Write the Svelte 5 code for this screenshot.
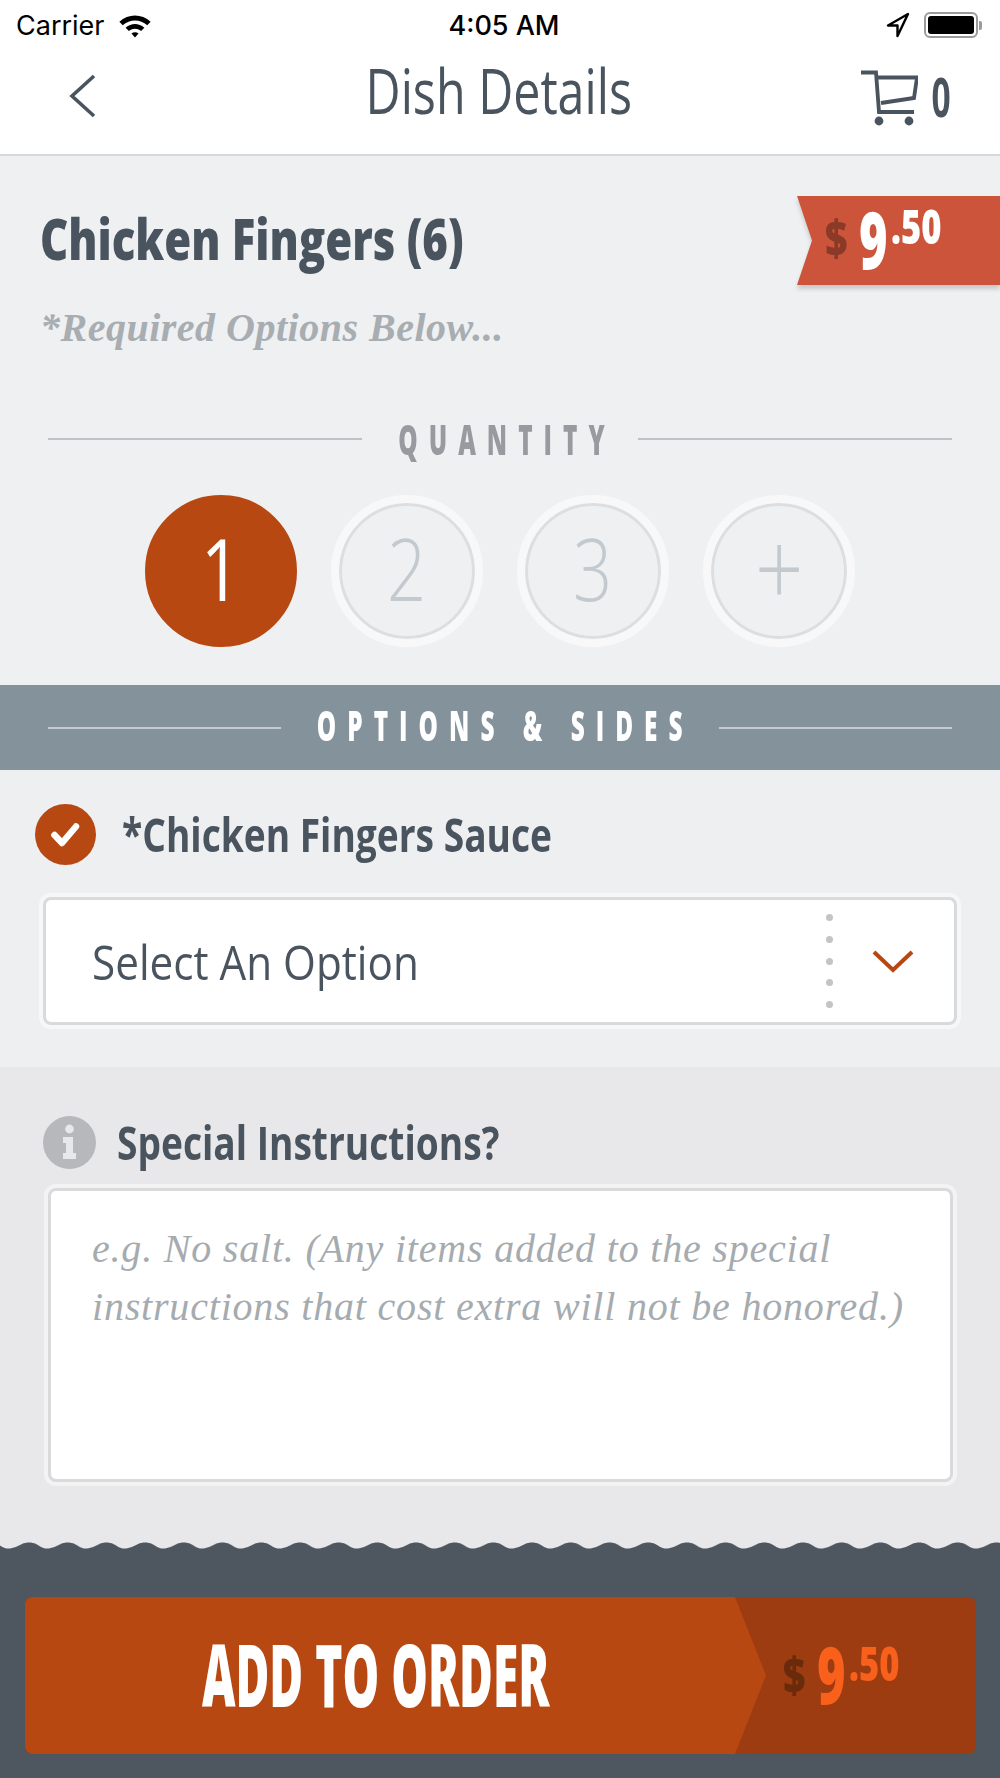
<script lang="ts">
    const quantities = ["1", "2", "3", "+"];
    let selected = $state("1");
</script>

<div class="page">
    <div class="status">
        <div class="status-left">
            <span>Carrier</span>
            <svg width="34" height="25" viewBox="0 0 32 24">
                <path d="M1 8.5C9.5 0.5 22.5 0.5 31 8.5L27.8 11.8C21 5.6 11 5.6 4.2 11.8Z" fill="#000" />
                <path d="M7 14.2C12.5 9.4 19.5 9.4 25 14.2L21.8 17.4C18 14.3 14 14.3 10.2 17.4Z" fill="#000" />
                <path d="M12.6 19.6C14.8 18 17.2 18 19.4 19.6L16 23.4Z" fill="#000" />
            </svg>
        </div>
        <span class="time">4:05 AM</span>
        <div class="status-right">
            <svg width="24" height="26" viewBox="0 0 24 26">
                <path d="M22 2L2 13.5H11.5V24Z" fill="none" stroke="#000" stroke-width="2.4" stroke-linejoin="round" />
            </svg>
            <div class="battery"><div class="battery-level"></div></div>
            <div class="battery-cap"></div>
        </div>
    </div>

    <header class="nav">
        <svg class="back" width="30" height="44" viewBox="0 0 30 44">
            <path d="M26 2L4 22L26 42" fill="none" stroke="#4a545f" stroke-width="3.6" />
        </svg>
        <h1><span>Dish Details</span></h1>
        <div class="cart">
            <svg width="58" height="56" viewBox="0 0 58 56">
                <path d="M1 2.5H16L19 42H54" fill="none" stroke="#4a545f" stroke-width="3.8" />
                <path d="M16 7.5H57L54 28L21 33" fill="none" stroke="#4a545f" stroke-width="3.8" />
                <circle cx="19" cy="51" r="4.4" fill="#4a545f" />
                <circle cx="49" cy="51" r="4.4" fill="#4a545f" />
            </svg>
            <span class="cart-count">0</span>
        </div>
    </header>

    <section class="dish">
        <div class="dish-head">
            <div class="dish-text">
                <h2><span>Chicken Fingers (6)</span></h2>
                <p class="required">*Required Options Below...</p>
            </div>
            <div class="ribbon-wrap">
                <div class="ribbon">
                    <span class="dollar">$</span>
                    <span class="big">9</span>
                    <span class="cents">.50</span>
                </div>
            </div>
        </div>

        <div class="divider quantity-divider">
            <i></i><span>QUANTITY</span><i></i>
        </div>

        <div class="quantities">
            {#each quantities as q}
                <button
                    class="qty"
                    class:active={selected === q}
                    class:plus={q === "+"}
                    onclick={() => (selected = q)}
                >
                    <span>{q}</span>
                </button>
            {/each}
        </div>
    </section>

    <div class="options-bar">
        <div class="divider">
            <i></i><span>OPTIONS &amp; SIDES</span><i></i>
        </div>
    </div>

    <section class="options">
        <div class="option-label">
            <svg width="61" height="61" viewBox="0 0 61 61">
                <circle cx="30.5" cy="30.5" r="30.5" fill="#b84812" />
                <path d="M19.5 31L27 39L41 22.5" fill="none" stroke="#fff" stroke-width="6.5" stroke-linecap="round" stroke-linejoin="round" />
            </svg>
            <h3><span>*Chicken Fingers Sauce</span></h3>
        </div>
        <div class="select">
            <span class="select-text"><span>Select An Option</span></span>
            <div class="dots"><b></b><b></b><b></b><b></b><b></b></div>
            <svg width="42" height="24" viewBox="0 0 42 24">
                <path d="M2 3L21 21L40 3" fill="none" stroke="#b84812" stroke-width="4" />
            </svg>
        </div>
    </section>

    <section class="instructions">
        <div class="instructions-label">
            <svg width="53" height="53" viewBox="0 0 53 53">
                <circle cx="26.5" cy="26.5" r="26.5" fill="#b7b8bc" />
                <circle cx="26.5" cy="13" r="4.4" fill="#e8e8ea" />
                <path d="M20 21H30V37H33V43H20V37H23V27H20Z" fill="#e8e8ea" />
            </svg>
            <h3><span>Special Instructions?</span></h3>
        </div>
        <div class="textarea">
            <p>e.g. No salt. (Any items added to the special<br />instructions that cost extra will not be honored.)</p>
        </div>
    </section>

    <svg class="wave" width="1000" height="9" viewBox="0 0 1000 9">
        <defs>
            <pattern id="scallop" width="38.7" height="9" patternUnits="userSpaceOnUse" patternTransform="translate(8 0)">
                <path d="M0 7.5C6 7.5 10 5 14 3C18 1 24 1 28 3C32 5 34 7.5 38.7 7.5V9H0Z" fill="#4e5660" />
            </pattern>
        </defs>
        <rect width="1000" height="9" fill="#e8e8ea" />
        <rect width="1000" height="9" fill="url(#scallop)" />
    </svg>

    <footer class="footer">
        <button class="add">
            <div class="add-main"><span>ADD TO ORDER</span></div>
            <div class="add-price">
                <span class="dollar">$</span>
                <span class="big">9</span>
                <span class="cents">.50</span>
            </div>
        </button>
    </footer>
</div>

<style>
    :global(body) {
        margin: 0;
        background: #fff;
    }
    .page {
        width: 1000px;
        height: 1778px;
        overflow: hidden;
        font-family: "Open Sans", sans-serif;
        color: #4a545f;
    }
    h1, h2, h3, p {
        margin: 0;
    }
    h1 span, h2 span, h3 span, .select-text span, .add-main span {
        display: inline-block;
    }

    /* status bar */
    .status {
        height: 50px;
        display: grid;
        grid-template-columns: 1fr auto 1fr;
        align-items: center;
        padding: 0 18px 0 16px;
        font-family: Inter, "Liberation Sans", sans-serif;
        font-size: 27px;
        color: #000;
    }
    .status-left {
        display: flex;
        align-items: center;
        gap: 13px;
    }
    .time {
        font-weight: 500;
        padding-left: 10px;
    }
    .status-right {
        display: flex;
        align-items: center;
        justify-content: flex-end;
    }
    .status-right svg {
        margin-right: 14px;
    }
    .battery {
        width: 54px;
        height: 26px;
        box-sizing: border-box;
        border: 2px solid #9b9b9b;
        border-radius: 6px;
        padding: 2px;
    }
    .battery-level {
        height: 100%;
        background: #000;
        border-radius: 3px;
    }
    .battery-cap {
        width: 3px;
        height: 9px;
        margin-left: 1px;
        background: #9b9b9b;
        border-radius: 0 2px 2px 0;
    }

    /* nav bar */
    .nav {
        height: 92px;
        border-bottom: 2px solid #d7d8da;
        display: flex;
        align-items: center;
        background: #fff;
        padding: 0 50px 12px 68px;
    }
    .back {
        flex: none;
    }
    .nav h1 {
        flex: 1;
        text-align: center;
        font-size: 62px;
        font-weight: 400;
        line-height: 1;
        padding: 0 0 12px 40px;
    }
    .nav h1 span {
        transform: scaleX(0.78);
    }
    .cart {
        display: flex;
        align-items: center;
        gap: 14px;
    }
    .cart svg {
        margin-top: 4px;
    }
    .cart-count {
        font-size: 54px;
        font-weight: 700;
        line-height: 1;
        transform: scaleX(0.62);
        width: 18px;
        display: flex;
        justify-content: center;
    }

    /* dish heading + quantity */
    .dish {
        height: 529px;
        background: #eff0f2;
        box-sizing: border-box;
        padding-top: 40px;
    }
    .dish-head {
        display: flex;
        justify-content: space-between;
        align-items: flex-start;
        height: 219px;
    }
    .dish-text {
        padding-left: 40px;
    }
    .dish-text h2 {
        font-size: 56px;
        font-weight: 800;
        line-height: 84px;
        white-space: nowrap;
    }
    .dish-text h2 span {
        transform: scaleX(0.78);
        transform-origin: left;
    }
    .required {
        font-family: "Liberation Serif", serif;
        font-style: italic;
        font-weight: 700;
        font-size: 40px;
        line-height: 44px;
        letter-spacing: 0.5px;
        margin-top: 26px;
        color: #a8adb1;
    }
    .ribbon-wrap {
        filter: drop-shadow(0 4px 2px rgba(0, 0, 0, 0.16));
    }
    .ribbon {
        width: 203px;
        height: 89px;
        background: #cb543a;
        clip-path: polygon(0 0, 100% 0, 100% 100%, 0 100%, 15px 50%);
        display: flex;
        align-items: flex-start;
        padding-left: 28px;
        box-sizing: border-box;
    }
    .dollar, .big, .cents {
        display: inline-block;
        line-height: 1;
        font-weight: 800;
        transform-origin: left;
        flex: none;
    }
    .dollar {
        width: 21px;
        font-size: 50px;
        transform: scaleX(0.78);
    }
    .big {
        width: 28px;
        font-size: 80px;
        transform: scaleX(0.61);
    }
    .cents {
        font-size: 48px;
        transform: scaleX(0.72);
    }
    .ribbon .dollar {
        color: #8a3a26;
        margin-top: 16px;
    }
    .ribbon .big {
        color: #fff;
        margin-top: 2px;
        margin-left: 13px;
    }
    .ribbon .cents {
        color: #fff;
        margin-top: 6px;
        margin-left: 4px;
    }

    .divider {
        display: flex;
        align-items: center;
        padding: 0 48px;
    }
    .divider i {
        flex: 1;
        height: 2px;
    }
    .divider span {
        display: flex;
        justify-content: center;
        flex: none;
        box-sizing: border-box;
        font-size: 42px;
        font-weight: 800;
        line-height: 48px;
        letter-spacing: 19px;
        white-space: nowrap;
    }
    .quantity-divider i {
        background: #bfc2c4;
    }
    .quantity-divider span {
        width: 276px;
        padding-left: 24px;
        color: #979b9f;
        transform: scaleX(0.58);
    }

    .quantities {
        display: flex;
        justify-content: center;
        gap: 34px;
        margin-top: 32px;
    }
    .qty {
        width: 152px;
        height: 152px;
        box-sizing: border-box;
        border-radius: 50%;
        border: 8px solid #f8f8f9;
        box-shadow: inset 0 0 0 3px #dcdedf;
        background: transparent;
        padding: 0 0 6px;
        font-family: inherit;
        font-size: 86px;
        font-weight: 300;
        color: #c2cad0;
        line-height: 1;
    }
    .qty span {
        display: inline-block;
        transform: scaleX(0.8);
    }
    .qty.active {
        background: #b84812;
        border-color: #b84812;
        box-shadow: none;
        color: #fff;
        font-weight: 400;
    }
    .qty.plus {
        font-size: 106px;
        padding-bottom: 10px;
    }

    /* options */
    .options-bar {
        height: 85px;
        background: #84929c;
        display: flex;
        flex-direction: column;
        justify-content: center;
    }
    .options-bar i {
        background: #c5ccd1;
    }
    .options-bar span {
        width: 438px;
        padding: 0 0 6px 18px;
        color: #fff;
        transform: scaleX(0.58);
    }
    .options {
        height: 297px;
        box-sizing: border-box;
        background: #eeeff1;
        padding: 34px 43px 0 35px;
    }
    .option-label {
        display: flex;
        align-items: center;
        gap: 26px;
    }
    .option-label h3, .instructions-label h3 {
        font-size: 47px;
        font-weight: 700;
        line-height: 1;
        white-space: nowrap;
    }
    .option-label h3 span, .instructions-label h3 span {
        transform: scaleX(0.79);
        transform-origin: left;
    }
    .select {
        margin: 32px 0 0 8px;
        height: 128px;
        box-sizing: border-box;
        background: #fff;
        border: 3px solid #d8dadb;
        border-radius: 8px;
        box-shadow: 0 0 0 4px #f6f7f8;
        display: flex;
        align-items: center;
        padding: 0 40px 0 46px;
    }
    .select-text {
        flex: 1;
        font-size: 48px;
    }
    .select-text span {
        transform: scaleX(0.88);
        transform-origin: left;
    }
    .dots {
        display: flex;
        flex-direction: column;
        gap: 14.6px;
        margin-right: 39px;
    }
    .dots b {
        width: 7px;
        height: 7px;
        border-radius: 50%;
        background: #c4c4c4;
    }

    /* special instructions */
    .instructions {
        height: 474px;
        box-sizing: border-box;
        background: #e8e8ea;
        padding: 49px 47px 0 43px;
    }
    .instructions-label {
        display: flex;
        align-items: center;
        gap: 21px;
    }
    .textarea {
        margin: 19px 0 0 5px;
        height: 294px;
        box-sizing: border-box;
        background: #fff;
        border: 3px solid #d8dadb;
        border-radius: 8px;
        box-shadow: 0 0 0 4px #f3f3f4;
        padding: 29px 0 0 41px;
    }
    .textarea p {
        font-family: "Liberation Serif", serif;
        font-style: italic;
        font-size: 40px;
        line-height: 58px;
        letter-spacing: 0.8px;
        color: #a5abaf;
        white-space: nowrap;
    }

    .wave {
        display: block;
    }

    /* bottom bar */
    .footer {
        height: 228px;
        box-sizing: border-box;
        background: #4e5660;
        padding: 47px 24px 0 25px;
    }
    .add {
        width: 100%;
        height: 157px;
        border: 0;
        padding: 0;
        border-radius: 8px;
        background: #9c3c10;
        display: flex;
        overflow: hidden;
        font-family: inherit;
        text-align: left;
    }
    .add-main {
        width: 741px;
        height: 100%;
        flex: none;
        background: #b84812;
        clip-path: polygon(0 0, 710px 0, 100% 50%, 710px 100%, 0 100%);
        display: flex;
        align-items: center;
        padding: 0 39px 5px 0;
        box-sizing: border-box;
        justify-content: center;
    }
    .add-main span {
        font-size: 87px;
        font-weight: 800;
        color: #fff;
        line-height: 1;
        white-space: nowrap;
        transform: scaleX(0.53);
    }
    .add-price {
        display: flex;
        align-items: flex-start;
        padding-left: 17px;
    }
    .add-price .dollar {
        color: #6a2a0c;
        margin-top: 52px;
    }
    .add-price .big {
        color: #f8601c;
        margin-top: 36px;
        margin-left: 13px;
    }
    .add-price .cents {
        color: #f8601c;
        margin-top: 42px;
        margin-left: 4px;
    }
</style>
